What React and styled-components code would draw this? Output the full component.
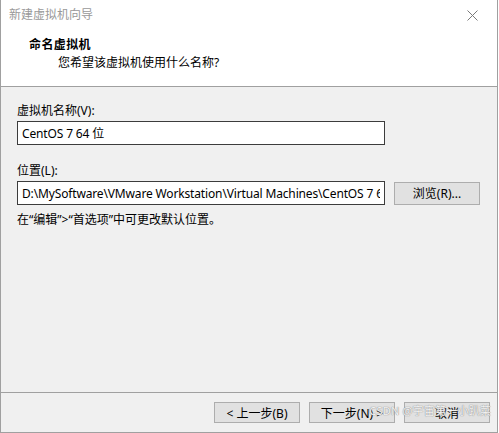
import React from "react";
import styled, { createGlobalStyle } from "styled-components";

const Global = createGlobalStyle`
  html, body {
    margin: 0;
    padding: 0;
    background: #ffffff;
  }
  * {
    box-sizing: border-box;
  }
`;

const font = `"Noto Sans", "Noto Sans CJK SC", sans-serif`;

const Window = styled.div`
  width: 498px;
  height: 433px;
  display: flex;
  flex-direction: column;
  border-left: 1px solid #a0a0a0;
  border-right: 1px solid #a0a0a0;
  border-bottom: 1px solid #a0a0a0;
  background: #f0f0f0;
  font-family: ${font};
  font-size: 12px;
  color: #000;
  position: relative;
  overflow: hidden;
`;

const TitleBar = styled.div`
  height: 30px;
  background: #fff;
  display: flex;
  align-items: center;
  justify-content: space-between;
  padding: 0 19px 0 8px;
  color: #999;
  line-height: 16px;
`;

const Header = styled.div`
  height: 57px;
  background: #fff;
  border-bottom: 1px solid #a0a0a0;
  padding: 7px 0 0 28px;
  display: flex;
  flex-direction: column;
  gap: 2px;
  line-height: 16px;
`;

const Heading = styled.div`
  font-weight: bold;
  letter-spacing: 0.4px;
`;

const Subtitle = styled.div`
  margin-left: 29px;
`;

const Body = styled.div`
  flex: 1;
  padding: 16px 0 0 16px;
  display: flex;
  flex-direction: column;
`;

const Label = styled.div`
  line-height: 16px;
  margin-top: ${(p) => p.$top || 0}px;
`;

const Row = styled.div`
  display: flex;
  align-items: center;
  gap: 9px;
  margin-top: 2px;
`;

const Field = styled.input`
  width: 368px;
  height: 24px;
  border: 1px solid #3c3c3c;
  background: #fff;
  padding: 0 4px;
  font-family: ${font};
  font-size: 12px;
  letter-spacing: -0.15px;
  color: #000;
  outline: none;
  margin: 0;
`;

const Button = styled.button`
  width: 86px;
  height: ${(p) => p.$h || 21}px;
  border: 1px solid #adadad;
  background: #e1e1e1;
  font-family: ${font};
  font-size: 12px;
  color: #000;
  padding: 0;
  margin: 0;
`;

const Note = styled.div`
  line-height: 16px;
  margin-top: 7px;
`;

const Footer = styled.div`
  height: 40px;
  border-top: 1px solid #a0a0a0;
  display: flex;
  justify-content: flex-end;
  gap: 9px;
  padding: 9px 7px 0 0;
`;

const Watermark = styled.div`
  position: absolute;
  right: 6px;
  bottom: 14px;
  font-size: 11px;
  color: rgba(255, 255, 255, 0.9);
  text-shadow: 0 0 1px #888, 0 0 1px #999;
  letter-spacing: 0.2px;
  pointer-events: none;
`;

const CloseIcon = () => (
  <svg width="11" height="11" viewBox="0 0 11 11">
    <path d="M0.5 0.5 L10.5 10.5 M10.5 0.5 L0.5 10.5" stroke="#7a7a7a" strokeWidth="1" fill="none" />
  </svg>
);

export default function App() {
  return (
    <>
      <Global />
      <Window>
        <TitleBar>
          <span>新建虚拟机向导</span>
          <CloseIcon />
        </TitleBar>
        <Header>
          <Heading>命名虚拟机</Heading>
          <Subtitle>您希望该虚拟机使用什么名称?</Subtitle>
        </Header>
        <Body>
          <Label>虚拟机名称(V):</Label>
          <Row>
            <Field readOnly value="CentOS 7 64 位" />
          </Row>
          <Label $top={18}>位置(L):</Label>
          <Row>
            <Field
              readOnly
              value="D:\MySoftware\VMware Workstation\Virtual Machines\CentOS 7 64 位"
            />
            <Button $h={23}>浏览(R)...</Button>
          </Row>
          <Note>在“编辑”&gt;“首选项”中可更改默认位置。</Note>
        </Body>
        <Footer>
          <Button>&lt; 上一步(B)</Button>
          <Button>下一步(N) &gt;</Button>
          <Button>取消</Button>
        </Footer>
        <Watermark>CSDN @宇宙第一小趴菜</Watermark>
      </Window>
    </>
  );
}
